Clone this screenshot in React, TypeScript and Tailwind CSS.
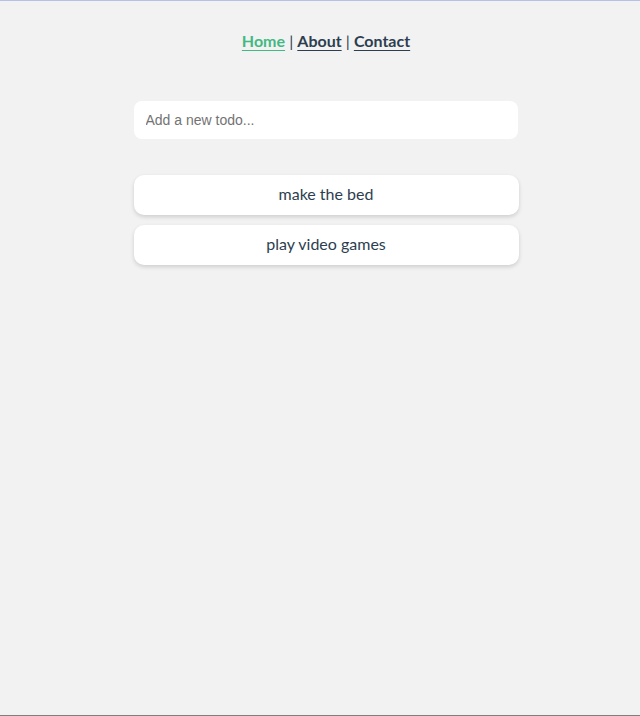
import React, { useState } from "react";

const todos = ["make the bed", "play video games"];

export default function App() {
  const [text, setText] = useState("");

  return (
    <div
      className="flex h-[716px] w-[640px] flex-col border-t border-b border-t-[#b3c2e6] border-b-[#7f7f7f] bg-[#f2f2f2] pl-[12px] text-[#2c3e50]"
      style={{ fontFamily: "Lato, 'Noto Sans', sans-serif" }}
    >
      <nav className="pt-[29px] text-center text-[16px] leading-[22px]">
        <a href="#" className="font-bold text-[#42b983] underline underline-offset-[3px]">
          Home
        </a>{" "}
        |{" "}
        <a href="#" className="font-bold underline underline-offset-[3px]">
          About
        </a>{" "}
        |{" "}
        <a href="#" className="font-bold underline underline-offset-[3px]">
          Contact
        </a>
      </nav>

      <div className="mx-auto mt-[49px] w-[385px]">
        <input
          type="text"
          value={text}
          onChange={(e) => setText(e.target.value)}
          placeholder="Add a new todo..."
          className="h-[38px] w-[384px] rounded-[8px] bg-white px-[12px] text-[14px] text-[#2c3e50] outline-none placeholder:text-[#737373]"
          style={{ fontFamily: "'Liberation Sans', Arial, sans-serif" }}
        />

        <ul className="mt-[36px] flex flex-col gap-[10px]">
          {todos.map((todo) => (
            <li
              key={todo}
              className="flex h-[40px] items-center justify-center rounded-[10px] bg-white pb-[2px] text-[16px] shadow-[0_2px_4px_rgba(0,0,0,0.15)]"
            >
              {todo}
            </li>
          ))}
        </ul>
      </div>
    </div>
  );
}
